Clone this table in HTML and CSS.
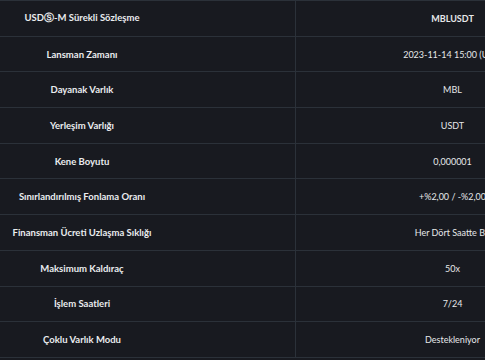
FILE: index.html
```html
<!DOCTYPE html>
<html lang="tr">
<head>
<meta charset="utf-8">
<link rel="stylesheet" href="styles.css">
</head>
<body>
<table class="spec">
<tbody>
<tr><th>USDⓈ-M Sürekli Sözleşme</th><td class="strong">MBLUSDT</td></tr>
<tr><th>Lansman Zamanı</th><td>2023-11-14 15:00 (UTC)</td></tr>
<tr><th>Dayanak Varlık</th><td>MBL</td></tr>
<tr><th>Yerleşim Varlığı</th><td>USDT</td></tr>
<tr><th>Kene Boyutu</th><td>0,000001</td></tr>
<tr><th>Sınırlandırılmış Fonlama Oranı</th><td>+%2,00 / -%2,00</td></tr>
<tr><th>Finansman Ücreti Uzlaşma Sıklığı</th><td>Her Dört Saatte Bir</td></tr>
<tr><th>Maksimum Kaldıraç</th><td>50x</td></tr>
<tr><th>İşlem Saatleri</th><td>7/24</td></tr>
<tr><th>Çoklu Varlık Modu</th><td>Destekleniyor</td></tr>
</tbody>
</table>
</body>
</html>
```
FILE: styles.css
```css
html, body {
  margin: 0;
  padding: 0;
  background: #181a20;
  overflow: hidden;
  width: 485px;
  height: 360px;
}
.spec {
  border-collapse: collapse;
  table-layout: fixed;
  width: 609px;
  font-family: "Lato", "Noto Sans", sans-serif;
  color: #eaecef;
  font-size: 9.5px;
}
.spec tr {
  height: 35.7px;
}
.spec th, .spec td {
  border-top: 1px solid #2b3139;
  border-bottom: 1px solid #2b3139;
  padding: 0;
  text-align: center;
  white-space: nowrap;
}
.spec th {
  width: 164px;
  padding-right: 131px;
  font-weight: 700;
  border-right: 1px solid #2b3139;
}
.spec td {
  font-family: "Lato", sans-serif;
  font-size: 9px;
  font-weight: 400;
  color: #e6e8ea;
}
.spec td.strong {
  font-weight: 700;
}
```
